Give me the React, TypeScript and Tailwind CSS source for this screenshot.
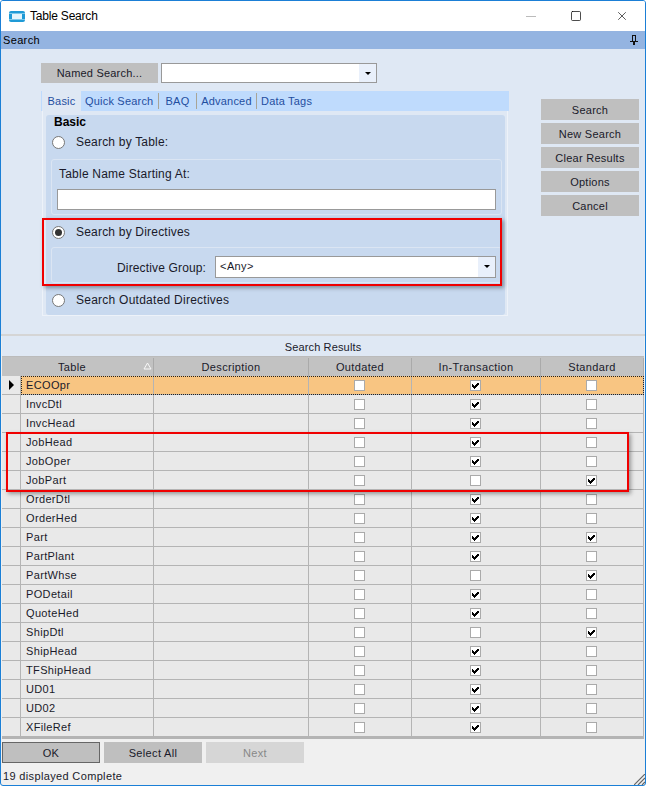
import { Square, X } from "lucide-react";

const rows = [
  { name: "ECOOpr", outdated: false, inTrans: true, standard: false },
  { name: "InvcDtl", outdated: false, inTrans: true, standard: false },
  { name: "InvcHead", outdated: false, inTrans: true, standard: false },
  { name: "JobHead", outdated: false, inTrans: true, standard: false },
  { name: "JobOper", outdated: false, inTrans: true, standard: false },
  { name: "JobPart", outdated: false, inTrans: false, standard: true },
  { name: "OrderDtl", outdated: false, inTrans: true, standard: false },
  { name: "OrderHed", outdated: false, inTrans: true, standard: false },
  { name: "Part", outdated: false, inTrans: true, standard: true },
  { name: "PartPlant", outdated: false, inTrans: true, standard: false },
  { name: "PartWhse", outdated: false, inTrans: false, standard: true },
  { name: "PODetail", outdated: false, inTrans: true, standard: false },
  { name: "QuoteHed", outdated: false, inTrans: true, standard: false },
  { name: "ShipDtl", outdated: false, inTrans: false, standard: true },
  { name: "ShipHead", outdated: false, inTrans: true, standard: false },
  { name: "TFShipHead", outdated: false, inTrans: true, standard: false },
  { name: "UD01", outdated: false, inTrans: true, standard: false },
  { name: "UD02", outdated: false, inTrans: true, standard: false },
  { name: "XFileRef", outdated: false, inTrans: true, standard: false },
];

const gridCols = "grid grid-cols-[19px_133px_155px_103px_129px_103px]";

function Radio({ on }: { on?: boolean }) {
  return (
    <span className="flex h-[13px] w-[13px] items-center justify-center rounded-full border border-[#777] bg-white">
      {on && <span className="h-[7px] w-[7px] rounded-full bg-[#333]" />}
    </span>
  );
}

function CheckBox({ on }: { on: boolean }) {
  return (
    <span className="flex h-[11px] w-[11px] items-center justify-center border border-[#aaa] bg-white">
      {on && (
        <svg width="9" height="9" viewBox="0 0 9 9" shapeRendering="crispEdges">
          <path d="M1 3h1v1h1v1h1V4h1V3h1V2h2v2H7v1H6v1H5v1H4v1H3V7H2V6H1z" fill="#000" />
        </svg>
      )}
    </span>
  );
}

function Caret() {
  return <span className="h-0 w-0 border-x-[3px] border-t-[3px] border-x-transparent border-t-black" />;
}

function SideButton({ label }: { label: string }) {
  return <div className="flex h-[21px] w-[98px] items-center justify-center bg-[#bfbfbf] pt-[1px] tracking-[0.25px]">{label}</div>;
}

export default function App() {
  return (
    <div className="relative h-[786px] w-[646px] overflow-hidden rounded-[3px] border border-[#1b7fd6] bg-[#f0f0f0] font-['Liberation_Sans',sans-serif] text-[11px] tracking-[0.35px] text-[#1a1a2a]">
      {/* title bar */}
      <div className="flex h-[30px] items-center bg-white">
        <svg width="16" height="11" viewBox="0 0 16 11" className="ml-[8px]">
          <rect width="16" height="11" rx="2" fill="#1f9ad6" />
          <rect y="2" width="16" height="1" fill="#7cc8ea" />
          <rect y="8" width="16" height="1" fill="#7cc8ea" />
          <rect x="3" y="3" width="10" height="5" fill="#e4f4fb" />
        </svg>
        <span className="ml-[5px] text-[12px] tracking-[-0.2px] text-black">Table Search</span>
        <div className="ml-auto flex items-center text-black">
          <span className="mr-[34px] h-px w-[10px] bg-[#bbb]" />
          <Square size={12} strokeWidth={1.4} className="mr-[33px]" />
          <X size={14} strokeWidth={1.1} className="mr-[16px]" />
        </div>
      </div>

      <div className="flex h-[18px] items-center justify-between bg-[#94b4e1] pl-[2px] pr-[3px] text-black">
        <span>Search</span>
        <svg width="8" height="10" viewBox="0 0 8 10" className="mr-[4px]" shapeRendering="crispEdges">
          <path d="M2 0h4v6H5V1H3v5H2zM0 6h8v1H0zM3 7h2v3H3z" fill="#111" />
        </svg>
      </div>

      {/* search panel */}
      <div className="flex h-[287px] border-b-2 border-[#d5d5d5] bg-[#dfe8f4] pt-[14px]">
        <div className="ml-[40px] w-[468px]">
          <div className="flex h-[20px] gap-[3px] tracking-[0.2px]">
            <div className="flex w-[117px] items-center justify-center bg-[#bfbfbf]">Named Search...</div>
            <div className="flex w-[216px] justify-end border border-[#999] bg-white">
              <span className="flex w-[17px] items-center justify-center bg-[#e9f0fb]">
                <Caret />
              </span>
            </div>
          </div>

          <div className="mt-[8px] flex h-[20px] items-center bg-[#bfdbfd] pl-[1px] tracking-[0.2px] text-[#1f4ea0]">
            <span className="flex h-full w-[39px] items-center justify-center self-stretch bg-[#dfe8f4]">Basic</span>
            <span className="ml-[4px] w-[74px] border-r border-[#a9a597]">Quick Search</span>
            <span className="w-[38px] border-r border-[#a9a597] text-center">BAQ</span>
            <span className="w-[60px] border-r border-[#a9a597] text-center">Advanced</span>
            <span className="ml-[4px]">Data Tags</span>
          </div>

          {/* basic group */}
          <div className="ml-[1px] h-[205px] w-[466px] border-b border-l border-r border-[#edf2f9] pl-[3px] pr-[2px] pt-[4px]">
            <div className="h-[200px] rounded-[3px] bg-[#c8d9ef]">
              <div className="pl-[8px] text-[12px] font-bold leading-[14px] tracking-normal text-black">Basic</div>
              <div className="mt-[5px] flex h-[16px] items-center gap-[11px] pl-[6px] text-[12px] tracking-[0.2px]">
                <Radio />
                <span>Search by Table:</span>
              </div>
              <div className="ml-[5px] mr-[3px] mt-[9px] h-[56px] rounded-[3px] border border-[#dbe5f3] px-[5px] pt-[6px]">
                <div className="ml-[2px] text-[12px] leading-[16px] tracking-[0.22px]">Table Name Starting At:</div>
                <div className="mt-[7px] h-[21px] border border-[#999] bg-white" />
              </div>
              <div className="mt-[9px] flex h-[16px] items-center gap-[11px] pl-[6px] text-[12px] tracking-[0.2px]">
                <Radio on />
                <span>Search by Directives</span>
              </div>
              <div className="ml-[5px] mr-[3px] mt-[7px] flex h-[36px] items-center rounded-[3px] border border-[#dbe5f3] pl-[65px] pr-[5px] pt-[3px]">
                <span className="pt-[2px] text-[12px] tracking-[0.15px]">Directive Group:</span>
                <div className="ml-[9px] flex h-[22px] flex-1 items-center justify-between border border-[#999] bg-white pl-[4px]">
                  <span>&lt;Any&gt;</span>
                  <span className="flex h-full w-[17px] items-center justify-center bg-[#e9f0fb]">
                    <Caret />
                  </span>
                </div>
              </div>
              <div className="mt-[9px] flex h-[16px] items-center gap-[11px] pl-[6px] text-[12px] tracking-[0.25px]">
                <Radio />
                <span>Search Outdated Directives</span>
              </div>
            </div>
          </div>
        </div>

        <div className="ml-[32px] mt-[36px] flex flex-col gap-[3px] text-center">
          <SideButton label="Search" />
          <SideButton label="New Search" />
          <SideButton label="Clear Results" />
          <SideButton label="Options" />
          <SideButton label="Cancel" />
        </div>
      </div>

      {/* results grid */}
      <div className="mx-[1px]">
        <div className="flex h-[21px] items-center justify-center border-b border-[#bbb] bg-[#dfe8f4] pt-[2px] tracking-[0.15px]">Search Results</div>
        <div className={`${gridCols} h-[19px] items-stretch bg-[#c2c2c2] pt-px`}>
          <div />
          <div className="relative flex items-center justify-center border-r border-[#aaa] pr-[30px]">
            Table
            <svg width="9" height="8" viewBox="0 0 9 8" className="absolute right-[1px] top-[4px]">
              <path d="M4.5 1 8 7H1z" fill="#c2c2c2" stroke="#f8f8f8" />
            </svg>
          </div>
          <div className="flex items-center justify-center border-r border-[#aaa]">Description</div>
          <div className="flex items-center justify-center border-r border-[#aaa]">Outdated</div>
          <div className="flex items-center justify-center border-r border-[#aaa]">In-Transaction</div>
          <div className="flex items-center justify-center border-r border-[#aaa]">Standard</div>
        </div>
        {rows.map((row, i) => {
          const selected = i === 0;
          const cell = "flex items-center justify-center border-r border-[#b4b4b4] pr-[2px]";
          return (
            <div
              key={row.name}
              className={`relative ${gridCols} h-[19px] border-b border-[#b4b4b4] ${selected ? "bg-[#f8c582]" : "bg-[#e9e9e9]"}`}
            >
              <div className="flex items-center justify-center border-r border-[#b4b4b4] bg-[#e9e9e9]">
                {selected && <span className="h-0 w-0 border-y-[5px] border-l-[5px] border-y-transparent border-l-black" />}
              </div>
              <div className="flex items-center border-r border-[#b4b4b4] pl-[5px]">{row.name}</div>
              <div className={cell} />
              <div className={cell}>
                <CheckBox on={row.outdated} />
              </div>
              <div className={cell}>
                <CheckBox on={row.inTrans} />
              </div>
              <div className={cell}>
                <CheckBox on={row.standard} />
              </div>
              {selected && <div className="absolute -bottom-px left-[19px] right-0 top-0 border border-dotted border-[#222]" />}
            </div>
          );
        })}
        <div className="h-[2px] bg-[#b4b4b4]" />
      </div>

      {/* footer */}
      <div className="ml-[1px] mt-[3px] flex h-[21px] gap-[4px] text-center">
        <div className="flex w-[98px] items-center justify-center border border-[#666] bg-[#bfbfbf] pt-px">OK</div>
        <div className="flex w-[98px] items-center justify-center bg-[#bfbfbf] pt-px">Select All</div>
        <div className="flex w-[98px] items-center justify-center bg-[#d6d6d6] pt-px text-[#888]">Next</div>
      </div>
      <div className="mt-[6px] pl-[2px] leading-[14px]">19 displayed Complete</div>

      {/* resize grip */}
      <svg width="11" height="11" viewBox="0 0 11 11" className="absolute bottom-0 right-0">
        <path d="M0 11 11 0M4 11l7-7M8 11l3-3" stroke="#666" strokeWidth="1.2" />
      </svg>

      {/* red annotation boxes */}
      <div className="absolute left-[41px] top-[217px] h-[68px] w-[460px] border-2 border-[#f00000] shadow-[2px_2px_4px_rgba(0,0,0,0.35)]" />
      <div className="absolute left-[5px] top-[431px] h-[60px] w-[623px] border-2 border-[#f00000] shadow-[2px_2px_4px_rgba(0,0,0,0.35)]" />
    </div>
  );
}
